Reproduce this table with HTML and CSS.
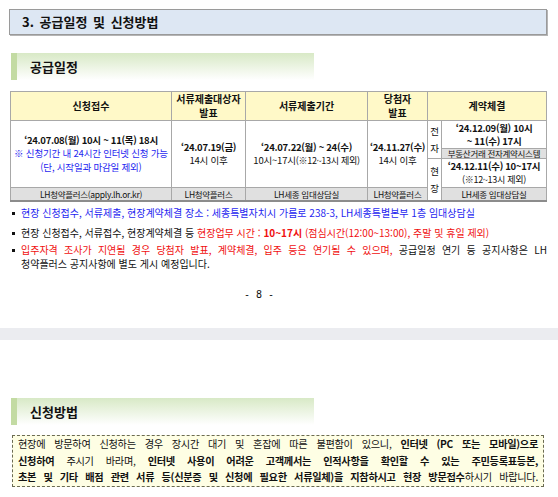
FILE: index.html
```html
<!DOCTYPE html>
<html lang="ko">
<head>
<meta charset="utf-8">
<title>공급일정 및 신청방법</title>
<link rel="stylesheet" href="styles.css">
</head>
<body>
<div class="page">
  <div class="h1">3. 공급일정 및 신청방법</div>
  <div class="h2 h2-first">공급일정</div>

  <table class="sched">
    <colgroup>
      <col style="width:161px">
      <col style="width:74px">
      <col style="width:122px">
      <col style="width:60px">
      <col style="width:14px">
      <col style="width:105px">
    </colgroup>
    <tr class="head">
      <th>신청접수</th>
      <th>서류제출대상자<br>발표</th>
      <th>서류제출기간</th>
      <th>당첨자<br>발표</th>
      <th colspan="2">계약체결</th>
    </tr>
    <tr class="r1">
      <td rowspan="3" class="main">
        <b>‘24.07.08(월) 10시 ~ 11(목) 18시</b><br>
        <span class="blue">※ 신청기간 내 24시간 인터넷 신청 가능<br>(단, 시작일과 마감일 제외)</span>
      </td>
      <td rowspan="3" class="main"><b>‘24.07.19(금)</b><br>14시 이후</td>
      <td rowspan="3" class="main"><b>‘24.07.22(월) ~ 24(수)</b><br>10시~17시<span class="sm">(※12~13시 제외)</span></td>
      <td rowspan="3" class="main"><b>‘24.11.27(수)</b><br>14시 이후</td>
      <td rowspan="2" class="lbl">전<br>자</td>
      <td class="sub"><b>‘24.12.09(월) 10시<br>~ 11(수) 17시</b></td>
    </tr>
    <tr class="r2">
      <td class="gray">부동산거래 전자계약시스템</td>
    </tr>
    <tr class="r3">
      <td rowspan="2" class="lbl">현<br>장</td>
      <td class="sub"><b>‘24.12.11(수) 10~17시</b><br><span class="sm">(※12~13시 제외)</span></td>
    </tr>
    <tr class="r4">
      <td class="gray">LH청약플러스(apply.lh.or.kr)</td>
      <td class="gray">LH청약플러스</td>
      <td class="gray">LH세종 임대상담실</td>
      <td class="gray">LH청약플러스</td>
      <td class="gray">LH세종 임대상담실</td>
    </tr>
  </table>

  <ul class="notes">
    <li class="n1 blue">현장 신청접수, 서류제출, 현장계약체결 장소 : 세종특별자치시 가름로 238-3, LH세종특별본부 1층 임대상담실</li>
    <li class="n2">현장 신청접수, 서류접수, 현장계약체결 등 <span class="red">현장업무 시간 : <b>10~17시</b> (점심시간(12:00~13:00), 주말 및 휴일 제외)</span></li>
    <li class="n3">
      <span class="line full"><span class="red">입주자격 조사가 지연될 경우 당첨자 발표, 계약체결, 입주 등은 연기될 수 있으며,</span> 공급일정 연기 등 공지사항은 LH</span>
      <span class="line">청약플러스 공지사항에 별도 게시 예정입니다.</span>
    </li>
  </ul>

  <div class="pageno">- 8 -</div>
</div>

<div class="gap"></div>

<div class="page">
  <div class="h2 h2-second">신청방법</div>
  <div class="notice">
    <span class="line">현장에 방문하여 신청하는 경우 장시간 대기 및 혼잡에 따른 불편함이 있으니, <b>인터넷 (PC 또는 모바일)으로</b></span>
    <span class="line"><b>신청하여</b> 주시기 바라며, <b>인터넷 사용이 어려운 고객께서는 인적사항을 확인할 수 있는 주민등록표등본,</b></span>
    <span class="line"><b>초본 및 기타 배점 관련 서류 등(신분증 및 신청에 필요한 서류일체)을 지참하시고 현장 방문접수</b>하시기 바랍니다.</span>
  </div>
</div>
</body>
</html>
```

FILE: styles.css
```css
html, body {
  margin: 0;
  padding: 0;
  background: #ffffff;
}
body {
  width: 558px;
  height: 497px;
  overflow: hidden;
  font-family: "Noto Sans CJK KR", "Noto Sans", sans-serif;
  color: #111;
}
.page {
  padding: 0 11px 0 9px;
}
.h1 {
  margin-top: 9px;
  height: 24px;
  border: 1px solid #9a9a9a;
  box-shadow: 1px 1px 0 #b5b5b5;
  background: #dde7f3;
  font-size: 13px;
  font-weight: bold;
  line-height: 24px;
  padding-left: 12px;
  word-spacing: 2px;
}
.h2 {
  width: 284px;
  height: 27px;
  margin-left: 2px;
  border-left: 6px solid #c3dba3;
  background: linear-gradient(to bottom, #d8e9c6, #ffffff);
  font-size: 13px;
  font-weight: bold;
  line-height: 27px;
  padding-left: 13px;
}
.h2-first {
  margin-top: 18px;
}
.sched {
  margin-top: 11px;
  margin-left: 1px;
  width: 536px;
  table-layout: fixed;
  border-collapse: collapse;
  font-size: 9.5px;
  text-align: center;
  border-top: 1px solid #a0a0a0;
  border-bottom: 2px solid #8c8c8c;
}
.sched th, .sched td {
  border: 1px solid #a8a8a8;
  padding: 0;
  overflow: hidden;
  white-space: nowrap;
}
.sched tr.head th {
  height: 28px;
  background: #fff9c8;
  font-weight: bold;
  font-size: 10px;
  line-height: 14px;
}
.sched tr.r1 td { height: 27px; }
.sched tr.r2 td { height: 9px; }
.sched tr.r3 td { height: 28px; }
.sched tr.r4 td { height: 12px; }
.sched td.main {
  line-height: 13.5px;
  letter-spacing: -0.2px;
}
.sched td.main b, .sched td.sub b {
  font-size: 9.5px;
  letter-spacing: -0.3px;
}
.sched td.sub {
  line-height: 12.5px;
}
.sched td.lbl {
  font-size: 9.5px;
  line-height: 17px;
}
.sched td.gray {
  background: #e0e0e0;
  font-size: 8.5px;
  line-height: 9px;
  letter-spacing: -0.3px;
}
.sm {
  font-size: 9px;
  letter-spacing: -0.3px;
}
.blue {
  color: #1f1ff0;
}
.red {
  color: #f01010;
}
.notes {
  list-style: none;
  margin: 4px 0 0 0;
  padding: 0 0 0 12px;
  font-size: 10px;
}
.notes li {
  position: relative;
  line-height: 14px;
}
.notes li::before {
  content: "";
  position: absolute;
  left: -9px;
  top: 6px;
  width: 3px;
  height: 3px;
  background: #111;
}
.notes li.n2 {
  margin-top: 6px;
}
.notes li.n3 {
  margin-top: 3px;
}
.line {
  display: block;
}
.line.full, .notice .line {
  text-align: justify;
  text-align-last: justify;
}
.pageno {
  margin-top: 18px;
  text-align: center;
  padding-right: 38px;
  font-family: "DejaVu Sans Mono", monospace;
  font-size: 10px;
  line-height: 12px;
}
.gap {
  margin-top: 27px;
  height: 12px;
  background: #ebecf0;
}
.h2-second {
  margin-top: 58px;
}
.notice {
  margin-top: 10px;
  margin-left: 3px;
  width: 520px;
  border: 1px dashed #6b6b52;
  background: #fefee4;
  font-size: 10.2px;
  letter-spacing: -0.3px;
  line-height: 16.5px;
  padding: 0 5px;
  color: #111;
}
```
